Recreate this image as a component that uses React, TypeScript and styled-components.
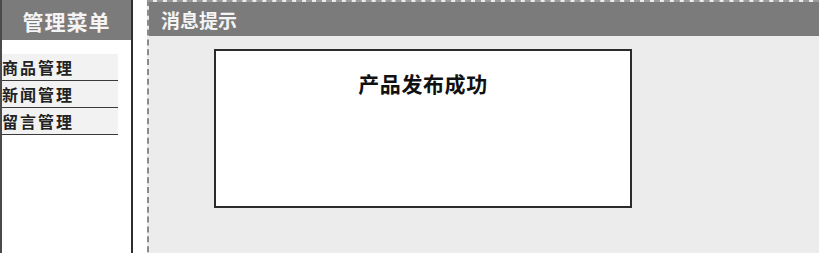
import React from "react";
import styled, { createGlobalStyle } from "styled-components";

const Global = createGlobalStyle`
  html, body { margin: 0; padding: 0; background: #ffffff; }
  body { font-family: "Noto Sans CJK SC", "Noto Sans", sans-serif; overflow: hidden; }
`;

const Page = styled.div`
  display: flex;
  align-items: flex-start;
  gap: 14px;
  width: 819px;
  height: 253px;
  overflow: hidden;
`;

const Sidebar = styled.aside`
  width: 133px;
  height: 270px;
  flex: none;
  box-sizing: border-box;
  border-left: 2px solid #4a4a4a;
  border-right: 2px solid #2e2e2e;
  background: #ffffff;
  display: flex;
  flex-direction: column;
`;

const SideHeader = styled.div`
  height: 39px;
  background: #7b7b7b;
  color: #f4f4f4;
  font-size: 21px;
  font-weight: 700;
  letter-spacing: 1px;
  display: flex;
  align-items: center;
  justify-content: center;
  padding-top: 1px;
`;

const MenuList = styled.ul`
  list-style: none;
  margin: 14px 0 0 0;
  padding: 0;
  width: 116px;
`;

const MenuItem = styled.li`
  height: 26px;
  border-bottom: 1px solid #3a3a3a;
  background: #f2f2f2;
  color: #222;
  font-size: 16px;
  font-weight: 700;
  letter-spacing: 2px;
  display: flex;
  align-items: center;
`;

const Main = styled.section`
  flex: 1;
  height: 260px;
  border-left: 2px dashed #8a8a8a;
  border-top: 2px dashed #9a9a9a;
  background: #ececec;
  display: flex;
  flex-direction: column;
`;

const MainHeader = styled.div`
  height: 34px;
  background: #7b7b7b;
  color: #f4f4f4;
  font-size: 19px;
  font-weight: 700;
  display: flex;
  align-items: center;
  padding-left: 12px;
`;

const Body = styled.div`
  padding: 13px 0 0 65px;
`;

const MessageBox = styled.div`
  width: 418px;
  height: 159px;
  box-sizing: border-box;
  border: 2px solid #2b2b2b;
  background: #ffffff;
  text-align: center;
  padding-top: 17px;
`;

const Title = styled.h2`
  margin: 0;
  font-size: 21px;
  font-weight: 700;
  letter-spacing: 0.6px;
  color: #111;
  line-height: 30px;
`;

const items = ["商品管理", "新闻管理", "留言管理"];

export default function App() {
  return (
    <>
      <Global />
      <Page>
        <Sidebar>
          <SideHeader>管理菜单</SideHeader>
          <MenuList>
            {items.map((t) => (
              <MenuItem key={t}>{t}</MenuItem>
            ))}
          </MenuList>
        </Sidebar>
        <Main>
          <MainHeader>消息提示</MainHeader>
          <Body>
            <MessageBox>
              <Title>产品发布成功</Title>
            </MessageBox>
          </Body>
        </Main>
      </Page>
    </>
  );
}
